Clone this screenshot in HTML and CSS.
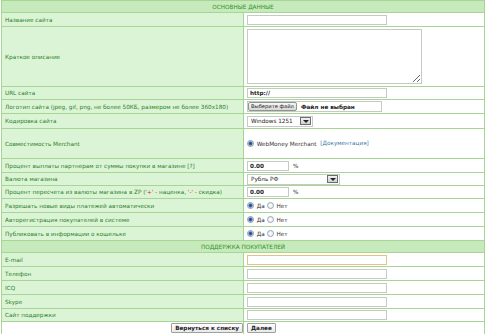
FILE: index.html
```html
<!DOCTYPE html>
<html>

<head>
    <meta charset="UTF-8">
    <title>Магазин</title>
    <link rel="stylesheet" href="styles.css">
</head>

<body>
    <form action="" name="shopForm" autocomplete="off">
        <table class="form">
            <tr class="r12 head"><td colspan="2">Основные данные</td></tr>
            <tr class="r14"><td class="lbl">Название сайта</td><td class="fld"><input class="txt" type="text" name="title"></td></tr>
            <tr class="r60"><td class="lbl">Краткое описание</td><td class="fld"><textarea class="area" name="descr"></textarea></td></tr>
            <tr class="r13"><td class="lbl">URL сайта</td><td class="fld"><input class="txt bold" type="text" name="url" value="http://"></td></tr>
            <tr class="r14"><td class="lbl">Логотип сайта (jpeg, gif, png, не более 50КБ, размером не более 360x180)</td>
                <td class="fld"><span class="file"><span class="file-btn">Выберите файл</span><span class="file-name">Файл не выбран</span></span></td></tr>
            <tr class="r15"><td class="lbl">Кодировка сайта</td>
                <td class="fld"><span class="sel w66"><span class="sel-val">Windows 1251</span><span class="sel-btn"></span></span></td></tr>
            <tr class="r30"><td class="lbl">Совместимость Merchant</td>
                <td class="fld"><label class="opt"><input type="radio" name="merchant" checked> WebMoney Merchant</label> <a class="doc" href="#">[Документация]</a></td></tr>
            <tr class="r14"><td class="lbl">Процент выплаты партнерам от суммы покупки в магазине [?]</td>
                <td class="fld"><input class="txt short bold" type="text" name="partner" value="0.00"><span class="pct">%</span></td></tr>
            <tr class="r13"><td class="lbl">Валюта магазина</td>
                <td class="fld"><span class="sel w93"><span class="sel-val">Рубль РФ</span><span class="sel-btn"></span></span></td></tr>
            <tr class="r13"><td class="lbl">Процент пересчета из валюты магазина в ZP (<span class="red">'+'</span> - наценка, <span class="red">'-'</span> - скидка)</td>
                <td class="fld"><input class="txt short bold" type="text" name="rate" value="0.00"><span class="pct">%</span></td></tr>
            <tr class="r14"><td class="lbl">Разрешать новые виды платежей автоматически</td>
                <td class="fld"><label class="opt"><input type="radio" name="auto" checked> Да</label><label class="opt"><input type="radio" name="auto"> Нет</label></td></tr>
            <tr class="r14"><td class="lbl">Авторегистрация покупателей в системе</td>
                <td class="fld"><label class="opt"><input type="radio" name="reg" checked> Да</label><label class="opt"><input type="radio" name="reg"> Нет</label></td></tr>
            <tr class="r14"><td class="lbl">Публиковать в информации о кошельке</td>
                <td class="fld"><label class="opt"><input type="radio" name="pub" checked> Да</label><label class="opt"><input type="radio" name="pub"> Нет</label></td></tr>
            <tr class="r12 head"><td colspan="2">Поддержка покупателей</td></tr>
            <tr class="r14"><td class="lbl">E-mail</td><td class="fld"><input class="txt focus" type="text" name="email"></td></tr>
            <tr class="r14"><td class="lbl">Телефон</td><td class="fld"><input class="txt" type="text" name="phone"></td></tr>
            <tr class="r14"><td class="lbl">ICQ</td><td class="fld"><input class="txt" type="text" name="icq"></td></tr>
            <tr class="r14"><td class="lbl">Skype</td><td class="fld"><input class="txt" type="text" name="skype"></td></tr>
            <tr class="r13"><td class="lbl">Сайт поддержки</td><td class="fld"><input class="txt" type="text" name="site"></td></tr>
            <tr class="r13 foot"><td class="back"><button type="button" class="btn">Вернуться к списку</button></td>
                <td class="fld"><button type="submit" class="btn">Далее</button></td></tr>
        </table>
    </form>
</body>

</html>
```

FILE: styles.css
```css
* {box-sizing: border-box;}

body {
    margin: 0;
    padding: 0 1px;
    background: #fff;
    font-family: "DejaVu Sans", Verdana, sans-serif;
    font-size: 5.7px;
}

/* таблица формы */
table.form {
    width: 484px;
    border-collapse: collapse;
    border: 1px solid #9fd28d;
}
table.form td {
    border: 1px solid #a6d596;
    padding: 0 0 0 3px;
    vertical-align: middle;
    white-space: nowrap;
}
td.lbl {
    width: 242px;
    background: #dcf4d6;
    color: #2a8226;
}
td.fld {background: #fff;}

/* высота строк */
tr.r12 td {height: 12px;}
tr.r13 td {height: 13px;}
tr.r14 td {height: 14px;}
tr.r15 td {height: 15px;}
tr.r30 td {height: 30px;}
tr.r60 td {height: 60px;}

/* заголовки разделов */
tr.head td {
    background: #c7eabc;
    color: #2f9226;
    text-align: center;
    text-transform: uppercase;
    padding: 0;
}

/* поля ввода */
input.txt, textarea.area {
    display: block;
    width: 140px;
    height: 10px;
    border: 1px solid #c3cbc3;
    padding: 0 2px;
    font: 5.7px "DejaVu Sans", Verdana, sans-serif;
    color: #222;
    outline: none;
}
input.bold {font-weight: bold;}
input.short {width: 42px; display: inline-block; vertical-align: middle;}
input.focus {border-color: #e1c47f;}
textarea.area {width: 175px; height: 55px; resize: both;}
span.pct {margin-left: 4px; color: #333; vertical-align: middle;}

/* выбор файла */
span.file {
    display: inline-flex;
    align-items: center;
    width: 135px;
    height: 11px;
    border: 1px solid #c3cbc3;
}
span.file-btn {
    height: 9px;
    line-height: 7px;
    padding: 0 2px;
    border: 1px solid #8e948e;
    border-radius: 2px;
    background: linear-gradient(#f6f6f6, #d8d8d8);
    color: #222;
    font-size: 5.2px;
}
span.file-name {margin-left: 4px; font-weight: bold; color: #222;}

/* выпадающий список */
span.sel {
    display: inline-flex;
    align-items: center;
    justify-content: space-between;
    height: 11px;
    border: 1px solid #c3cbc3;
    padding: 0 1px 0 3px;
    color: #222;
}
span.w66 {width: 66px;}
span.w93 {width: 93px;}
span.sel-btn {
    width: 11px;
    height: 8px;
    border: 1px solid #6d6d6d;
    background: linear-gradient(#f2f2f2, #cfcfcf);
    display: flex;
    align-items: center;
    justify-content: center;
}
span.sel-btn::after {
    content: "";
    border-left: 3px solid transparent;
    border-right: 3px solid transparent;
    border-top: 3px solid #222;
}

/* переключатели */
label.opt {color: #333; margin-right: 2px; vertical-align: middle;}
label.opt input {
    appearance: none;
    -webkit-appearance: none;
    width: 7px;
    height: 7px;
    margin: 0 1px 0 0;
    vertical-align: -1px;
    border: 1px solid #9aa6b4;
    border-radius: 50%;
    background: radial-gradient(circle, #fff 0, #dfe4ea 100%);
}
label.opt input:checked {
    background: radial-gradient(circle, #1d3f80 0, #3a6db3 1.5px, #c9d8ea 2.5px);
}
a.doc {color: #3b7aa8; text-decoration: none;}
span.red {color: #e02020;}

/* кнопки */
tr.foot td {background: #fff;}
td.back {text-align: right; padding-right: 2px;}
button.btn {
    height: 10px;
    padding: 0 3px;
    border: 1px solid #a0a0a0;
    border-radius: 1px;
    background: linear-gradient(#fff, #e8e8e8);
    font: bold 5.7px "DejaVu Sans", Verdana, sans-serif;
    color: #222;
    line-height: 8px;
}
```
